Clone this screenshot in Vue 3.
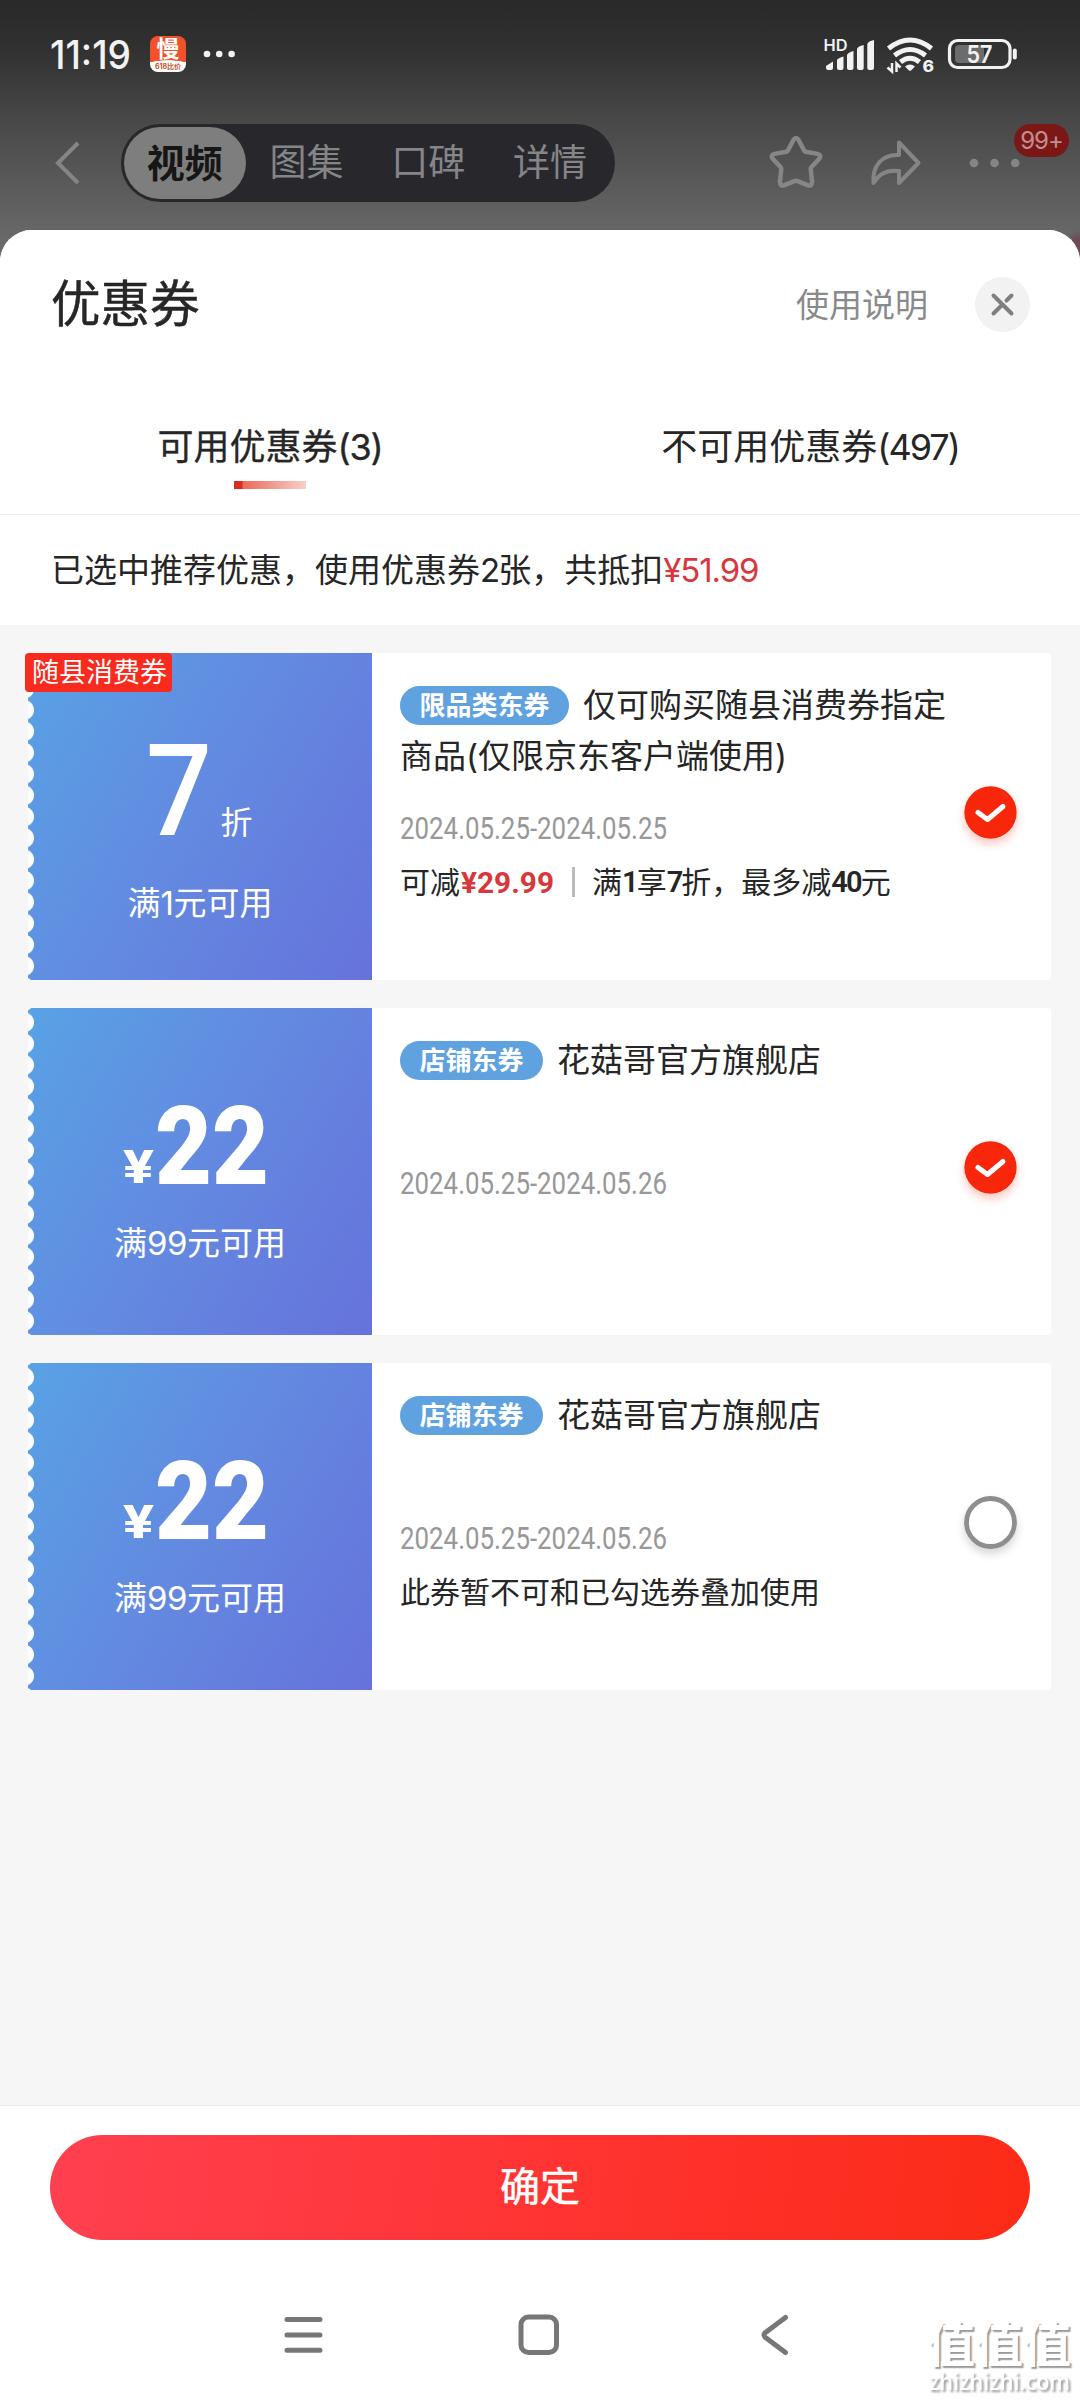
<script setup>
const headerTabs = ['视频', '图集', '口碑', '详情']

const coupons = [
  {
    id: 1,
    corner: '随县消费券',
    discount: '7',
    condition: ['满', '1', '元可用'],
    tag: '限品类东券',
    title: '仅可购买随县消费券指定商品(仅限京东客户端使用)',
    date: '2024.05.25-2024.05.25',
    saving: '¥29.99',
    checked: true,
  },
  {
    id: 2,
    amount: '22',
    condition: ['满', '99', '元可用'],
    tag: '店铺东券',
    title: '花菇哥官方旗舰店',
    date: '2024.05.25-2024.05.26',
    checked: true,
  },
  {
    id: 3,
    amount: '22',
    condition: ['满', '99', '元可用'],
    tag: '店铺东券',
    title: '花菇哥官方旗舰店',
    date: '2024.05.25-2024.05.26',
    note: '此券暂不可和已勾选券叠加使用',
    checked: false,
  },
]
</script>

<template>
  <div class="screen">
    <header class="backdrop">
      <div class="status">
        <svg class="clock" width="84" height="48" viewBox="0 0 84 48">
          <text x="0" y="38.500" textLength="81" lengthAdjust="spacingAndGlyphs">11:19</text>
        </svg>
        <div class="app-icon">
          <span class="app-char">慢</span>
          <span class="app-sub">618比价</span>
        </div>
        <svg class="more" width="34" height="10" viewBox="0 0 34 10" fill="#f2f2f2">
          <circle cx="5" cy="5" r="3.3" /><circle cx="17.2" cy="5" r="3.3" /><circle cx="29.6" cy="5" r="3.3" />
        </svg>
        <svg class="indicators" width="200" height="48" viewBox="820 30 200 48" fill="#f2f2f2">
          <text class="hd" x="823.5" y="50.5" textLength="24" lengthAdjust="spacingAndGlyphs">HD</text>
          <path d="M826 66l7-4.500v6.500q0 2-2 2h-3q-2 0-2-2zM837 60q1-2 6.500-3.500V68q0 2-2 2h-2.500q-2 0-2-2zM847 55q1-2.500 6.500-4V68q0 2-2 2h-2.500q-2 0-2-2zM857 49q1-3 6.700-4V68q0 2-2 2h-2.700q-2 0-2-2zM867.300 44q1-3 6.700-4V68q0 2-2 2h-2.700q-2 0-2-2z" />
          <g fill="none" stroke="#f2f2f2" stroke-width="5">
            <path d="M888.500 48.500Q910 31.500 931.500 48.500" />
            <path d="M894.500 55.500Q910 43.500 925.500 55.500" />
            <path d="M900.500 62Q910 54.500 919.500 62" />
          </g>
          <path d="M905 66.500Q910 62.500 915 66.500L911.300 70.300Q910 71.300 908.700 70.300z" />
          <path d="M892 63v8.500l-4.500-4M896.500 72v-8.500l4 4" fill="none" stroke="#f2f2f2" stroke-width="2.500" />
          <text class="six" x="922.500" y="72" textLength="11.500" lengthAdjust="spacingAndGlyphs">6</text>
          <rect x="949.500" y="40.500" width="60.500" height="27" rx="8" fill="none" stroke="#f2f2f2" stroke-width="3.200" />
          <rect x="955" y="45" width="29" height="18" rx="4" fill="#6c6c6c" />
          <rect x="1012.800" y="48.500" width="4" height="11" rx="2" />
          <text class="level" x="966.500" y="62.500" textLength="26" lengthAdjust="spacingAndGlyphs">57</text>
        </svg>
      </div>
      <div class="topbar">
        <svg class="back" width="30" height="48" viewBox="0 0 30 48">
          <path d="M25 4L5 24L25 44" fill="none" stroke="#858585" stroke-width="4" />
        </svg>
        <nav class="capsule">
          <span v-for="(t, i) in headerTabs" :key="t" :class="['cap-tab', { current: i === 0 }]">{{ t }}</span>
        </nav>
        <svg class="star" width="60" height="60" viewBox="0 0 60 60">
          <path
            d="M27.300 7.200Q30 2.800 32.700 7.200L38.200 17.600Q38.700 18.500 39.700 18.700L51.500 20.900Q56.300 22.200 53 26L45.300 34.300Q44.500 35.200 44.700 36.300L46.100 48.800Q46.100 53.700 41.500 52.100L31.500 48.100Q30 47.600 28.500 48.100L18.500 52.100Q13.900 53.700 13.900 48.800L15.300 36.300Q15.500 35.200 14.700 34.300L7 26Q3.700 22.200 8.500 20.900L20.300 18.700Q21.300 18.500 21.800 17.600Z"
            fill="none" stroke="#868686" stroke-width="4.500" stroke-linejoin="round" />
        </svg>
        <svg class="share" width="56" height="52" viewBox="0 0 56 52">
          <path
            d="M31 5.500L50.500 26L31 46V34Q14 31.500 5.500 46C4 29 14 17 31 18Z"
            fill="none" stroke="#858585" stroke-width="4" stroke-linejoin="round" />
        </svg>
        <div class="dots-wrap">
          <svg width="54" height="12" viewBox="0 0 54 12" fill="#858585">
            <circle cx="6" cy="6" r="4.300" /><circle cx="26.500" cy="6" r="4.300" /><circle cx="47.200" cy="6" r="4.300" />
          </svg>
          <span class="badge">99+</span>
        </div>
      </div>
    </header>

    <main class="sheet-wrap">
      <div class="sheet">
        <div class="sheet-head">
          <h1>优惠券</h1>
          <span class="help">使用说明</span>
          <span class="close">
            <svg width="55" height="55" viewBox="0 0 55 55">
              <path d="M18.500 18.500L36.500 36.500M36.500 18.500L31.500 23.500M27 28L18.500 36.500" stroke="#7f7f7f" stroke-width="4" stroke-linecap="round" />
            </svg>
          </span>
        </div>
        <div class="tabs">
          <div class="tab active">可用优惠券<span class="n">(3)</span><i class="underline"></i></div>
          <div class="tab">不可用优惠券<span class="n">(497)</span></div>
        </div>
        <p class="summary">已选中推荐优惠，使用优惠券<span class="n">2</span>张，共抵扣<em>¥51.99</em></p>

        <section class="list">
          <article v-for="c in coupons" :key="c.id" class="coupon">
            <div class="face">
              <span v-if="c.corner" class="corner">{{ c.corner }}</span>
              <svg v-if="c.discount" class="value" width="344" height="200" viewBox="0 0 344 200">
                <text class="big-seven" x="118" y="182" textLength="66" lengthAdjust="spacingAndGlyphs">{{ c.discount }}</text>
                <text class="unit" x="192.500" y="180.500">折</text>
              </svg>
              <svg v-else class="value" width="344" height="200" viewBox="0 0 344 200">
                <text class="yen" x="95" y="175" textLength="31" lengthAdjust="spacingAndGlyphs">¥</text>
                <text class="big" x="127" y="175.500" textLength="114" lengthAdjust="spacingAndGlyphs">{{ c.amount }}</text>
              </svg>
              <p :class="['cond', { low: c.discount }]">{{ c.condition[0] }}<span class="n">{{ c.condition[1] }}</span>{{ c.condition[2] }}</p>
            </div>
            <div class="info">
              <p class="title"><span class="tag">{{ c.tag }}</span><span>{{ c.title }}</span></p>
              <svg class="date" width="272" height="32" viewBox="0 0 272 32">
                <text x="0" y="26.500" textLength="267" lengthAdjust="spacingAndGlyphs">{{ c.date }}</text>
              </svg>
              <p v-if="c.saving" class="detail">
                可减<svg class="saving" width="95" height="38" viewBox="0 0 95 38">
                  <text x="1" y="30" textLength="93" lengthAdjust="spacingAndGlyphs">{{ c.saving }}</text>
                </svg><i class="bar"></i>满<b>1</b>享<b>7</b>折，最多减<b>40</b>元
              </p>
              <p v-else-if="c.note" class="detail">{{ c.note }}</p>
            </div>
            <div class="pick">
              <svg v-if="c.checked" class="checked" width="53" height="53" viewBox="0 0 53 53">
                <circle cx="26.500" cy="26.500" r="26.200" fill="#f8270c" />
                <path d="M14 26.500L23.500 33.500L39 20.500" fill="none" stroke="#fff" stroke-width="5" stroke-linecap="round" stroke-linejoin="round" />
              </svg>
              <svg v-else class="unchecked" width="53" height="53" viewBox="0 0 53 53">
                <circle cx="26.500" cy="26.500" r="24" fill="#fff" stroke="#8e8e8e" stroke-width="4.800" />
              </svg>
            </div>
          </article>
        </section>

        <footer class="foot">
          <button class="confirm">确定</button>
          <div class="sysnav">
            <svg width="44" height="44" viewBox="0 0 44 44" stroke="#777" stroke-width="5" stroke-linecap="round">
              <path d="M5 6.500H38M5 22H38M5 37.200H38" />
            </svg>
            <svg width="44" height="44" viewBox="0 0 44 44">
              <rect x="4" y="4" width="35.500" height="35.500" rx="7.500" fill="none" stroke="#777" stroke-width="5" />
            </svg>
            <svg width="44" height="44" viewBox="0 0 44 44">
              <path d="M33.500 4.500L13.500 19.500Q10.500 22 13.500 24.500L33.500 39.500" fill="none" stroke="#777" stroke-width="5" stroke-linecap="round" />
            </svg>
          </div>
          <div class="watermark">
            <span class="wm-cn">值值值</span>
            <svg width="152" height="30" viewBox="0 0 152 30">
              <text x="4" y="19" textLength="141" lengthAdjust="spacingAndGlyphs">zhizhizhi.com</text>
            </svg>
          </div>
        </footer>
      </div>
    </main>
  </div>
</template>

<style>
body {
  margin: 0;
}
</style>

<style scoped>
* {
  box-sizing: border-box;
}
h1,
p {
  margin: 0;
  font-weight: 400;
}
.screen {
  width: 1080px;
  height: 2400px;
  display: flex;
  flex-direction: column;
  overflow: hidden;
  color: #262626;
  font-family: Inter, 'Noto Sans CJK SC', sans-serif;
  background: linear-gradient(#292929 0, #313131 50px, #484848 120px, #696969 240px, #696969 260px);
}
svg {
  display: block;
  flex: none;
  overflow: visible;
}
.backdrop {
  flex: none;
  height: 230px;
}
.status {
  height: 108px;
  display: flex;
  align-items: center;
  padding-left: 50px;
}
.clock text {
  font: 500 39px Inter, sans-serif;
  fill: #f2f2f2;
}
.app-icon {
  width: 36px;
  height: 36px;
  margin-left: 16px;
  border-radius: 8px;
  display: flex;
  flex-direction: column;
  align-items: center;
  background: radial-gradient(ellipse 34px 14px at 50% 38px, #fff 96%, #f1512b 100%);
}
.app-char {
  font-size: 23px;
  line-height: 27px;
  font-weight: 700;
  color: #fff;
}
.app-sub {
  font-size: 7px;
  line-height: 8px;
  font-weight: 700;
  color: #c0562f;
  white-space: nowrap;
}
.more {
  margin-left: 16px;
}
.indicators {
  margin-left: auto;
  margin-right: 60px;
}
.hd {
  font: 600 16px Inter, sans-serif;
}
.six {
  font: 800 16px Inter, sans-serif;
}
.level {
  font: 600 24px Inter, sans-serif;
}
.topbar {
  height: 110px;
  display: flex;
  align-items: center;
  padding-left: 53px;
}
.capsule {
  margin-left: 38px;
  width: 494px;
  height: 78px;
  padding: 3px;
  border-radius: 39px;
  background: #28282c;
  display: flex;
}
.cap-tab {
  width: 121.700px;
  height: 72px;
  line-height: 72px;
  text-align: center;
  font-size: 37px;
  color: #858588;
}
.cap-tab.current {
  border-radius: 36px;
  background: #7e7e7e;
  color: #161616;
  font-weight: 700;
  font-size: 38px;
}
.star {
  margin-left: 151px;
}
.share {
  margin-left: 42px;
}
.dots-wrap {
  position: relative;
  margin-left: 44px;
}
.badge {
  position: absolute;
  left: 46px;
  top: -33px;
  width: 55px;
  height: 33px;
  border-radius: 17px;
  background: #7c1717;
  color: #c09090;
  font-size: 24px;
  line-height: 33px;
  text-align: center;
  letter-spacing: -1px;
}
.sheet-wrap {
  flex: 1;
  display: flex;
  background: radial-gradient(circle at 1080px 16px, #6e4a57 8px, transparent 16px);
}
.sheet {
  flex: 1;
  display: flex;
  flex-direction: column;
  border-radius: 32px 32px 0 0;
  background: #f6f6f6;
  overflow: hidden;
}
.sheet-head {
  flex: none;
  height: 148px;
  padding: 0 50px 0 51px;
  display: flex;
  align-items: center;
  background: #fff;
}
h1 {
  flex: 1;
  font-size: 49.500px;
  line-height: 62px;
  -webkit-text-stroke: 0.500px #262626;
}
.help {
  margin-bottom: 3px;
  font-size: 33px;
  color: #8a8a8a;
}
.close {
  margin-left: 47px;
  width: 55px;
  height: 55px;
  border-radius: 50%;
  background: #f2f2f2;
}
.tabs {
  flex: none;
  height: 137px;
  display: flex;
  background: #fff;
  border-bottom: 1px solid #ececec;
}
.tab {
  flex: 1;
  display: flex;
  flex-wrap: wrap;
  justify-content: center;
  align-content: flex-start;
  padding-top: 44px;
  font-size: 36px;
  line-height: 50px;
}
.tab .n {
  letter-spacing: -2px;
}
.tab.active {
  -webkit-text-stroke: 0.300px #262626;
}
.tab.active .n {
  letter-spacing: -1.200px;
}
.underline {
  width: 72px;
  height: 8px;
  margin: 9px 234px 0;
  background: linear-gradient(90deg, #d92d20 0 8px, #ea6a5a 9px, #f8d0cb);
}
.summary {
  flex: none;
  height: 110px;
  padding-left: 51px;
  line-height: 110px;
  font-size: 33px;
  background: #fff;
}
.summary .n {
  letter-spacing: -2px;
}
.summary em {
  font-style: normal;
  color: #d8373c;
  letter-spacing: -1.100px;
}
.list {
  flex: 1;
  padding: 28px 29px 0 28px;
  display: flex;
  flex-direction: column;
  gap: 28px;
}
.coupon {
  flex: none;
  height: 327px;
  display: flex;
  border-radius: 4px;
  background: #fff;
}
.face {
  position: relative;
  width: 344px;
  display: flex;
  flex-direction: column;
  color: #fff;
  background:
    radial-gradient(circle at -4px 50%, #fafcff 9.600px, transparent 10.400px) 0 3.700px / 10px 21.330px repeat-y,
    linear-gradient(120deg, #58a2e5, #6389e0 50%, #6672db);
}
.corner {
  position: absolute;
  left: -3px;
  top: 0;
  width: 147px;
  height: 39px;
  padding-left: 2px;
  border-radius: 4px;
  background: #f92a1e;
  font-size: 27px;
  line-height: 40px;
  text-align: center;
}
.value text {
  fill: #fff;
  font-family: Roboto, sans-serif;
}
.value .big-seven {
  font-size: 128px;
  font-weight: 500;
}
.value .unit {
  font-family: 'Noto Sans CJK SC', sans-serif;
  font-size: 32px;
}
.value .yen {
  font-size: 47px;
  font-weight: 800;
}
.value .big {
  font-size: 109px;
  font-weight: 900;
}
.cond {
  margin-top: 10px;
  text-align: center;
  font-size: 33px;
  line-height: 50px;
}
.cond.low {
  margin-top: 25px;
}
.cond .n {
  letter-spacing: -0.500px;
}
.info {
  width: 592px;
  padding: 27px 0 0 28px;
  display: flex;
  flex-direction: column;
}
.title {
  width: 550px;
  height: 132px;
  font-size: 33px;
  line-height: 51px;
}
.tag {
  display: inline-block;
  height: 39px;
  padding: 0 19.500px;
  margin-right: 14px;
  vertical-align: middle;
  position: relative;
  top: -3px;
  border-radius: 20px;
  background: #5fa2df;
  color: #fff;
  font-size: 26px;
  line-height: 39px;
  font-weight: 700;
}
.date text {
  font: 400 30.500px Roboto, sans-serif;
  fill: #989898;
}
.detail {
  display: flex;
  align-items: center;
  height: 50px;
  margin-top: 13px;
  font-size: 30px;
  line-height: 50px;
  white-space: nowrap;
}
.saving text {
  font: 700 30px Roboto, sans-serif;
  fill: #d8373c;
}
.detail b {
  font: 600 29px Roboto, sans-serif;
  letter-spacing: -1.900px;
}
.bar {
  width: 3px;
  height: 30px;
  margin: 0 17px 0 17px;
  background: #bcbcbc;
}
.pick {
  padding-top: 133px;
}
.checked {
  border-radius: 50%;
  box-shadow: 0 5px 9px rgba(248, 39, 12, 0.25);
}
.unchecked {
  border-radius: 50%;
  box-shadow: 0 5px 9px rgba(0, 0, 0, 0.16);
}
.foot {
  position: relative;
  flex: none;
  height: 295px;
  padding: 29px 50px 0;
  border-top: 1px solid #e9e9e9;
  background: #fff;
}
.confirm {
  display: block;
  width: 980px;
  height: 105px;
  padding: 0 0 1px;
  border: 0;
  border-radius: 53px;
  background: linear-gradient(98deg, #ff4050, #ff3433 50%, #fb2b16);
  color: #fff;
  font: 400 40px/104px Inter, 'Noto Sans CJK SC', sans-serif;
  -webkit-text-stroke: 0.500px #fff;
}
.sysnav {
  display: flex;
  justify-content: space-between;
  margin: 73px 234px 0 232px;
}
.watermark {
  position: absolute;
  right: 3px;
  bottom: -1px;
  width: 152px;
}
.wm-cn {
  display: block;
  padding-left: 2px;
  font-size: 48px;
  line-height: 53px;
  font-weight: 700;
  color: #fff;
  text-shadow: 2px 2px 1.500px #999;
}
.watermark text {
  font: 600 23px 'Open Sans', sans-serif;
  fill: #fff;
}
.watermark svg {
  filter: drop-shadow(2px 2px 0.800px #999);
}
</style>
